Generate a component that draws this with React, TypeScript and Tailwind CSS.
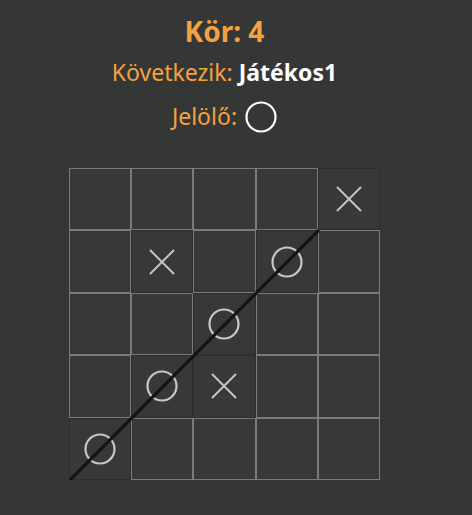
import React from "react";

type Mark = "X" | "O" | null;

const board: Mark[][] = [
  [null, null, null, null, "X"],
  [null, "X", null, "O", null],
  [null, null, "O", null, null],
  [null, "O", "X", null, null],
  ["O", null, null, null, null],
];

function XMark() {
  return (
    <svg width="26" height="26" viewBox="0 0 26 26">
      <path d="M1 1 L25 25 M25 1 L1 25" stroke="#c4c4c4" strokeWidth="2" />
    </svg>
  );
}

function OMark() {
  return (
    <svg width="32" height="32" viewBox="0 0 32 32">
      <circle cx="16" cy="16" r="14.5" fill="none" stroke="#c8c8c8" strokeWidth="2.2" />
    </svg>
  );
}

export default function App() {
  return (
    <div
      className="min-h-[515px] w-full bg-[#353736]"
      style={{ fontFamily: '"Noto Sans", "Open Sans", sans-serif' }}
    >
      <div className="w-[449px] flex flex-col items-center pt-[13px]">
        <div className="text-[28px] leading-[36px] font-bold text-[#f6a13f]">Kör: 4</div>
        <div className="mt-[7px] text-[23px] leading-[32px] text-[#f6a13f]">
          Következik: <span className="font-bold text-white">Játékos1</span>
        </div>
        <div className="mt-[11px] flex items-center gap-[8px] text-[23px] leading-[32px] text-[#f6a13f]">
          <span>Jelölő:</span>
          <svg width="32" height="32" viewBox="0 0 32 32" className="mt-[2px]">
            <circle cx="16" cy="16" r="14.5" fill="none" stroke="#ffffff" strokeWidth="2.2" />
          </svg>
        </div>
        <div className="relative mt-[35px] grid grid-cols-5">
          {board.flatMap((row, r) =>
            row.map((m, c) => (
              <div
                key={`${r}-${c}`}
                className={
                  "w-[62.4px] h-[62.4px] flex items-center justify-center bg-[#3a3836] border " +
                  (m ? "border-[#2e2e2e]" : "border-[#7b7b7b]")
                }
              >
                {m === "X" ? <XMark /> : m === "O" ? <OMark /> : null}
              </div>
            ))
          )}
          <svg
            className="absolute left-0 top-0 pointer-events-none"
            width="312"
            height="312"
            viewBox="0 0 312 312"
          >
            <line x1="0" y1="313" x2="250" y2="62" stroke="#141414" strokeWidth="3.2" />
          </svg>
        </div>
      </div>
    </div>
  );
}
